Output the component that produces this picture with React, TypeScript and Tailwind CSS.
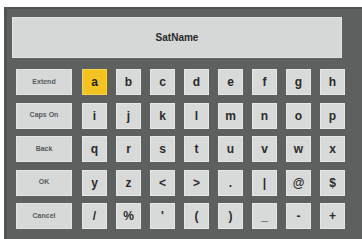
const sideKeys = ['Extend', 'Caps On', 'Back', 'OK', 'Cancel'];

const charRows = [
  ['a', 'b', 'c', 'd', 'e', 'f', 'g', 'h'],
  ['i', 'j', 'k', 'l', 'm', 'n', 'o', 'p'],
  ['q', 'r', 's', 't', 'u', 'v', 'w', 'x'],
  ['y', 'z', '<', '>', '.', '|', '@', '$'],
  ['/', '%', "'", '(', ')', '_', '-', '+'],
];

export default function App() {
  return (
    <div className="h-[239px] w-[362px] overflow-hidden bg-white pl-[4px] pt-[7px] font-['Liberation_Sans',Arial,sans-serif]">
      <div className="flex h-[232px] w-[358px] flex-col border-l-[3px] border-t-[2px] border-[#4f5453] bg-[#5c6160] pl-[5px] pt-[8px]">
        {/* name field */}
        <div className="flex h-[41px] w-[330px] items-center justify-center border border-[#e2e3e3] bg-[#d6d7d7] text-[10px] font-bold text-[#2a2a2a]">
          SatName
        </div>

        {/* keyboard */}
        <div className="ml-[4px] mt-[11px] grid grid-cols-[57px_repeat(8,25px)] gap-x-[9px] gap-y-[7.5px]">
          {charRows.map((row, r) => (
            <div key={r} className="contents">
              <div className="flex h-[26px] w-[56px] items-center justify-center border border-[#e4e5e5] bg-[#d7d9d9] text-[7px] font-bold text-[#555a5a]">
                {sideKeys[r]}
              </div>
              {row.map((ch, i) => {
                const active = r === 0 && i === 0;
                return (
                  <div
                    key={ch}
                    className={
                      active
                        ? 'flex h-[26px] w-[25px] items-center justify-center border border-[#f7d24a] bg-[#f3c421] text-[12px] font-bold text-[#222]'
                        : 'flex h-[26px] w-[25px] items-center justify-center border border-[#e6e7e7] bg-[#d8dada] text-[12px] font-bold text-[#2b2b2b]'
                    }
                  >
                    {ch}
                  </div>
                );
              })}
            </div>
          ))}
        </div>
      </div>
    </div>
  );
}
